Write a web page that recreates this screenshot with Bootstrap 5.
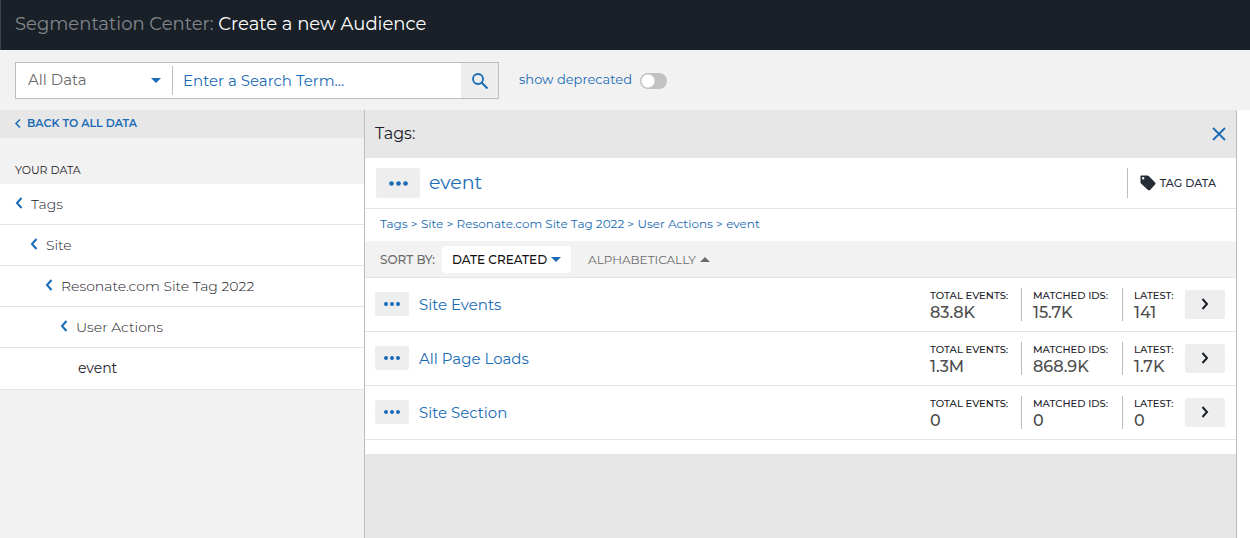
<!DOCTYPE html>
<html lang="en">
<head>
<meta charset="utf-8">
<meta name="viewport" content="width=device-width, initial-scale=1">
<title>Segmentation Center: Create a new Audience</title>
<link href="https://cdn.jsdelivr.net/npm/bootstrap@5.3.0/dist/css/bootstrap.min.css" rel="stylesheet">
<style>
  :root { --blue: #1a6bb5; --ink: #1a2027; --line: #e4e4e4; --rule: #bdbdbd; --pale: #f2f2f2; --grey: #e7e7e7; --chip: #eeeeee; }
  body { font-family: Montserrat, Inter, sans-serif; font-size: 15px; line-height: 20px; color: var(--ink); background: #fff; }
  a, .blue { color: var(--blue); text-decoration: none; }
  svg { display: block; flex: none; fill: none; stroke: currentColor; }
  .topbar { background: #1a2027; min-height: 50px; padding: 0 15px 2px 14px; border-left: 1px solid #3c4148; font-size: 18px; line-height: 28px; }
  .topbar .crumb { color: #84878d; }
  .toolbar { background: var(--pale); padding: 12px 15px 11px; }
  .searchbox { width: 484px; height: 37px; border: 1px solid var(--rule); background: #fff; }
  .scope { width: 156px; }
  .scope select { appearance: none; border: 0; background: transparent; color: #6b6b6b; padding: 0 12px 2px; height: 35px; font-size: 15px; }
  .scope svg { position: absolute; right: 11px; top: 15px; pointer-events: none; color: var(--blue); }
  .searchbox input { border: 0; border-left: 1px solid var(--rule); height: 29px; padding: 0 10px 1px; color: var(--blue); font-size: 15px; min-width: 0; }
  .searchbox input::placeholder { color: var(--blue); opacity: 1; }
  .searchbox button { width: 37px; border: 0; background: #ededed; color: var(--blue); }
  .deprecated { font-size: 13px; margin-left: 20px; padding-bottom: 4px; }
  .toggle { appearance: none; width: 27px; height: 16px; margin: 4px 0 0; border-radius: 8px; background: #c2c2c2 radial-gradient(circle at 8px 8px, #fff 6px, transparent 7px); }
  .sidebar { width: 365px; flex: none; background: var(--pale); border-right: 1px solid var(--rule); }
  .back { background: var(--grey); height: 28px; padding: 0 14px 2px; font-size: 11px; font-weight: 600; gap: 5px; }
  .group-title { font-size: 11px; line-height: 16px; font-weight: 400; margin: 0; padding: 24px 15px 6px; }
  .tree a { color: var(--ink); height: 41px; border-bottom: 1px solid var(--line); background: #fff; font-weight: 300; font-size: 14px; gap: 8px; padding-left: calc(15px + var(--level) * 15px); }
  .tree a svg { color: var(--blue); margin-bottom: 3px; }
  .tree a[aria-current] { font-weight: 400; padding: 0 0 2px 78px; height: 42px; }
  .panel { background: var(--grey); border-right: 1px solid var(--rule); margin-right: 13px; min-width: 0; }
  .panel-head { height: 48px; padding: 0 10px; }
  .panel-head h2 { font-size: 16px; font-weight: 400; line-height: 20px; margin: 0; }
  .plain { border: 0; padding: 0; background: transparent; }
  .chip { border: 0; border-radius: 2px; background: var(--chip); color: var(--blue); padding: 0; display: flex; align-items: center; justify-content: center; width: 34px; height: 24px; }
  .chip.large { width: 44px; height: 30px; }
  .chip.go { width: 40px; height: 29px; color: var(--ink); }
  .item-head { background: #fff; border-bottom: 1px solid var(--line); height: 51px; padding: 0 20px 0 11px; gap: 9px; }
  .item-head h1 { font-size: 19px; line-height: 24px; font-weight: 400; margin: 0; }
  .tagdata { border-left: 1px solid var(--rule); height: 30px; padding-left: 12px; gap: 4px; font-size: 11px; font-weight: 500; color: #262c38; }
  .trail { background: #fff; padding: 5px 15px 7px; font-size: 12px; }
  .sort { background: var(--pale); border-bottom: 1px solid var(--line); height: 37px; padding: 1px 15px 0; font-size: 12px; color: #6b6b6b; gap: 7px; }
  .sort button { color: #6b6b6b; height: 27px; padding: 0 10px; border: 0; border-radius: 3px; background: transparent; display: flex; align-items: center; gap: 4px; }
  .sort button.on { background: #fff; color: #111; font-weight: 500; }
  .rows { background: #fff; padding-bottom: 14px; }
  .entry { height: 54px; border-bottom: 1px solid var(--line); padding: 0 11px 1px 10px; gap: 10px; }
  .entry > a { padding-top: 1px; }
  .stats { margin: 0; height: 33px; }
  .stats > div { padding: 0 0 0 11px; border-left: 1px solid var(--rule); }
  .stats > div:first-child { border-color: transparent; }
  .stats dt { font-size: 10px; line-height: 15px; font-weight: 500; }
  .stats dd { margin: 0; font-size: 16px; line-height: 20px; font-weight: 500; color: #4d4d4d; }
  .c-total { width: 103px; } .c-match { width: 101px; } .c-last { width: 53px; }
</style>
</head>
<body class="d-flex flex-column min-vh-100">
<svg class="d-none" aria-hidden="true">
  <symbol id="dots" viewBox="0 0 18 6"><g fill="currentColor" stroke="none"><circle cx="3" cy="3" r="2"/><circle cx="9" cy="3" r="2"/><circle cx="15" cy="3" r="2"/></g></symbol>
  <symbol id="left" viewBox="0 0 8 12"><path d="M6.500 1 2 6l4.500 5" stroke-width="2"/></symbol>
  <symbol id="right" viewBox="0 0 8 12"><path d="M1.500 1 6 6l-4.500 5" stroke-width="2"/></symbol>
  <symbol id="down" viewBox="0 0 10 5"><path d="M0 0h10L5 5z" fill="currentColor" stroke="none"/></symbol>
</svg>

<header class="topbar d-flex align-items-center text-white"><div><span class="crumb">Segmentation Center:</span> Create a new Audience</div></header>

<form class="toolbar d-flex align-items-center">
  <div class="searchbox d-flex align-items-center">
    <div class="scope position-relative">
      <select class="w-100" aria-label="Data scope"><option>All Data</option></select>
      <svg width="10" height="5"><use href="#down"/></svg>
    </div>
    <input class="flex-grow-1" type="text" placeholder="Enter a Search Term..." aria-label="Enter a Search Term">
    <button class="align-self-stretch d-flex align-items-center justify-content-center p-0" type="button" aria-label="Search">
      <svg width="18" height="18" viewBox="0 0 18 18"><circle cx="7" cy="7" r="5" stroke-width="1.800"/><path d="M10.500 10.500 16.500 16.500" stroke-width="2"/></svg>
    </button>
  </div>
  <div class="deprecated d-flex align-items-center gap-2">
    <label class="blue" for="dep">show deprecated</label>
    <input class="toggle" type="checkbox" role="switch" id="dep">
  </div>
</form>

<div class="d-flex flex-grow-1">
  <nav class="sidebar">
    <a class="back d-flex align-items-center" href="#"><svg width="8" height="9" viewBox="0 0 8 9"><path d="M6 .5 2 4.500l4 4" stroke-width="1.500"/></svg>BACK TO ALL DATA</a>
    <h2 class="group-title">YOUR DATA</h2>
    <div class="tree">
      <a class="d-flex align-items-center" style="--level:0" href="#"><svg width="8" height="12"><use href="#left"/></svg>Tags</a>
      <a class="d-flex align-items-center" style="--level:1" href="#"><svg width="8" height="12"><use href="#left"/></svg>Site</a>
      <a class="d-flex align-items-center" style="--level:2" href="#"><svg width="8" height="12"><use href="#left"/></svg>Resonate.com Site Tag 2022</a>
      <a class="d-flex align-items-center" style="--level:3" href="#"><svg width="8" height="12"><use href="#left"/></svg>User Actions</a>
      <a class="d-flex align-items-center" aria-current="page" href="#">event</a>
    </div>
  </nav>

  <main class="panel flex-grow-1">
    <div class="panel-head d-flex align-items-center justify-content-between">
      <h2>Tags:</h2>
      <button class="plain blue" type="button" aria-label="Close"><svg width="14" height="14" viewBox="0 0 14 14"><path d="m1 1 12 12M13 1 1 13" stroke-width="1.800"/></svg></button>
    </div>
    <div class="item-head d-flex align-items-center">
      <button class="chip large" type="button" aria-label="More"><svg width="21" height="7"><use href="#dots"/></svg></button>
      <h1 class="blue flex-grow-1">event</h1>
      <button class="tagdata d-flex align-items-center border-top-0 border-bottom-0 border-end-0 bg-transparent pe-0" type="button">
        <svg width="16" height="16" viewBox="0 0 16 16"><path fill="currentColor" stroke="none" fill-rule="evenodd" d="M1.500.5h6c.5 0 .9.200 1.200.5l6.400 6.400c.6.6.6 1.500 0 2.100l-5 5.500c-.6.6-1.500.6-2.100 0L1 8.500C.7 8.200.5 7.800.5 7.300V1.500c0-.6.400-1 1-1zM3.200 2a1.200 1.200 0 1 0 0 2.400 1.200 1.200 0 0 0 0-2.400z"/></svg>TAG DATA</button>
    </div>
    <nav class="trail blue" aria-label="Path"><a href="#">Tags</a> &gt; <a href="#">Site</a> &gt; <a href="#">Resonate.com Site Tag 2022</a> &gt; <a href="#">User Actions</a> &gt; <a href="#">event</a></nav>
    <div class="sort d-flex align-items-center">
      <span class="fw-medium">SORT BY:</span>
      <button class="on" type="button">DATE CREATED <svg class="blue" width="10" height="5"><use href="#down"/></svg></button>
      <button type="button">ALPHABETICALLY <svg width="10" height="5" viewBox="0 0 10 5"><path d="M0 5h10L5 0z" fill="currentColor" stroke="none"/></svg></button>
    </div>
    <div class="rows">
      <div class="entry d-flex align-items-center">
        <button class="chip" type="button" aria-label="More"><svg width="18" height="6"><use href="#dots"/></svg></button>
        <a class="flex-grow-1" href="#">Site Events</a>
        <dl class="stats d-flex"><div class="c-total"><dt>TOTAL EVENTS:</dt><dd>83.8K</dd></div><div class="c-match"><dt>MATCHED IDS:</dt><dd>15.7K</dd></div><div class="c-last"><dt>LATEST:</dt><dd>141</dd></div></dl>
        <button class="chip go" type="button" aria-label="Open"><svg width="8" height="12"><use href="#right"/></svg></button>
      </div>
      <div class="entry d-flex align-items-center">
        <button class="chip" type="button" aria-label="More"><svg width="18" height="6"><use href="#dots"/></svg></button>
        <a class="flex-grow-1" href="#">All Page Loads</a>
        <dl class="stats d-flex"><div class="c-total"><dt>TOTAL EVENTS:</dt><dd>1.3M</dd></div><div class="c-match"><dt>MATCHED IDS:</dt><dd>868.9K</dd></div><div class="c-last"><dt>LATEST:</dt><dd>1.7K</dd></div></dl>
        <button class="chip go" type="button" aria-label="Open"><svg width="8" height="12"><use href="#right"/></svg></button>
      </div>
      <div class="entry d-flex align-items-center">
        <button class="chip" type="button" aria-label="More"><svg width="18" height="6"><use href="#dots"/></svg></button>
        <a class="flex-grow-1" href="#">Site Section</a>
        <dl class="stats d-flex"><div class="c-total"><dt>TOTAL EVENTS:</dt><dd>0</dd></div><div class="c-match"><dt>MATCHED IDS:</dt><dd>0</dd></div><div class="c-last"><dt>LATEST:</dt><dd>0</dd></div></dl>
        <button class="chip go" type="button" aria-label="Open"><svg width="8" height="12"><use href="#right"/></svg></button>
      </div>
    </div>
  </main>
</div>
<script src="https://cdn.jsdelivr.net/npm/bootstrap@5.3.0/dist/js/bootstrap.bundle.min.js"></script>
</body>
</html>
